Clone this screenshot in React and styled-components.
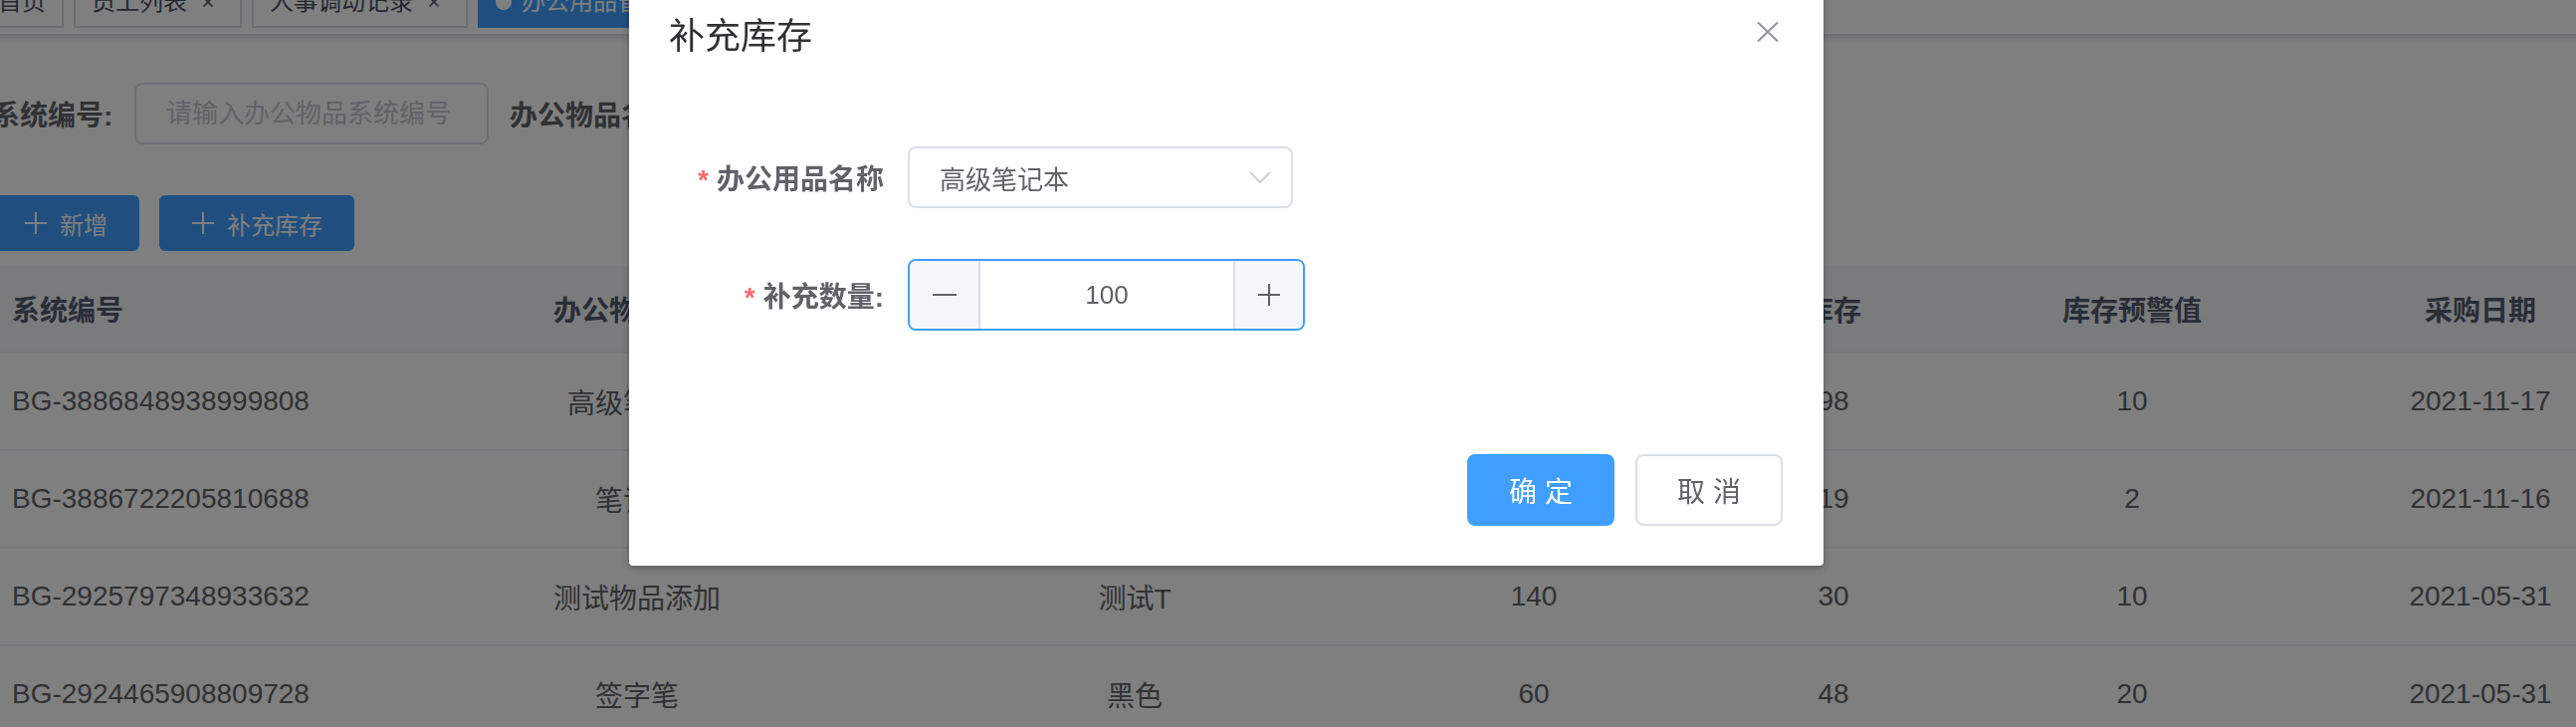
import React from "react";
import styled, { createGlobalStyle } from "styled-components";

const tags = [
	{ title: "首页" },
	{ title: "员工列表", closable: true },
	{ title: "人事调动记录", closable: true },
	{ title: "办公用品管理", closable: true, active: true },
];

const columns = [
	{ title: "系统编号", align: "left" },
	{ title: "办公物品名称" },
	{ title: "规格型号" },
	{ title: "采购数量" },
	{ title: "库存" },
	{ title: "库存预警值" },
	{ title: "采购日期" },
];

const rows = [
	["BG-3886848938999808", "高级笔记本", "A5", "200", "98", "10", "2021-11-17"],
	["BG-3886722205810688", "笔记本", "B5", "100", "19", "2", "2021-11-16"],
	["BG-2925797348933632", "测试物品添加", "测试T", "140", "30", "10", "2021-05-31"],
	["BG-2924465908809728", "签字笔", "黑色", "60", "48", "20", "2021-05-31"],
];

function CloseSmall() {
	return (
		<svg width="32" height="32" viewBox="0 0 32 32">
			<path d="M11.5 11.5 L20.5 20.5 M20.5 11.5 L11.5 20.5" stroke="#495060" strokeWidth="1.6" fill="none" />
		</svg>
	);
}

function PlusIcon({ size = 24, color = "#fff", width = 2 }) {
	return (
		<svg width={size} height={size} viewBox="0 0 24 24">
			<path d="M12 1 V23 M1 12 H23" stroke={color} strokeWidth={width} fill="none" />
		</svg>
	);
}

function App() {
	return (
		<>
			<GlobalStyle />
			<Main>
				<TagsBar>
					{tags.map((t) => (
						<Tag key={t.title} $active={t.active}>
							{t.active && <Dot />}
							{t.title}
							{t.closable && (
								<TagClose>
									<CloseSmall />
								</TagClose>
							)}
						</Tag>
					))}
				</TagsBar>

				<SearchRow>
					<SearchLabel>系统编号:</SearchLabel>
					<TextInput placeholder="请输入办公物品系统编号" readOnly />
					<SearchLabel $gap>办公物品名称:</SearchLabel>
					<TextInput placeholder="请输入办公物品名称" readOnly />
				</SearchRow>

				<ButtonRow>
					<ToolButton>
						<PlusIcon />
						<span>新增</span>
					</ToolButton>
					<ToolButton>
						<PlusIcon />
						<span>补充库存</span>
					</ToolButton>
				</ButtonRow>

				<Table>
					<HeadRow>
						{columns.map((c) => (
							<HeadCell key={c.title} $align={c.align}>
								{c.title}
							</HeadCell>
						))}
					</HeadRow>
					{rows.map((r) => (
						<BodyRow key={r[0]}>
							{r.map((v, i) => (
								<Cell key={i} $align={columns[i].align}>
									{v}
								</Cell>
							))}
						</BodyRow>
					))}
				</Table>
			</Main>

			<Overlay />
			<Dialog>
				<DialogHeader>
					<DialogTitle>补充库存</DialogTitle>
					<DialogClose>
						<svg width="32" height="32" viewBox="0 0 32 32">
							<path d="M6 6.5 L26 25.5 M26 6.5 L6 25.5" stroke="#909399" strokeWidth="2" fill="none" />
						</svg>
					</DialogClose>
				</DialogHeader>
				<DialogBody>
					<FormItem $height={62} $space={51}>
						<FormLabel>
							<Required>*</Required>办公用品名称
						</FormLabel>
						<SelectBox>
							<span>高级笔记本</span>
							<svg width="22" height="12" viewBox="0 0 22 12">
								<path d="M1 1 L11 11 L21 1" stroke="#C0C4CC" strokeWidth="1.6" fill="none" />
							</svg>
						</SelectBox>
					</FormItem>
					<FormItem $height={72} $space={44}>
						<FormLabel>
							<Required>*</Required>补充数量:
						</FormLabel>
						<NumberBox>
							<Stepper $side="left">
								<svg width="24" height="24" viewBox="0 0 24 24">
									<path d="M0 12 H24" stroke="#606266" strokeWidth="2" fill="none" />
								</svg>
							</Stepper>
							<NumberValue>100</NumberValue>
							<Stepper $side="right">
								<PlusIcon color="#606266" />
							</Stepper>
						</NumberBox>
					</FormItem>
				</DialogBody>
				<DialogFooter>
					<DialogButton $primary>确 定</DialogButton>
					<DialogButton>取 消</DialogButton>
				</DialogFooter>
			</Dialog>
		</>
	);
}

const GlobalStyle = createGlobalStyle`
	html, body {
		margin: 0;
		padding: 0;
		background: #fff;
		overflow: hidden;
	}
	body {
		font-family: "Liberation Sans", "Noto Sans CJK SC", sans-serif;
		color: #606266;
	}
	* {
		box-sizing: border-box;
	}
`;

// page is scrolled a little, so the content starts above and left of the window
const Main = styled.div`
	margin: -32px 0 0 -8px;
	width: 2700px;
`;

const TagsBar = styled.div`
	height: 68px;
	padding-top: 8px;
	display: flex;
	align-items: flex-start;
	gap: 10px;
	background: #fff;
	border-bottom: 2px solid #d8dce5;
	box-shadow: 0 2px 6px rgba(0, 0, 0, 0.12), 0 0 6px rgba(0, 0, 0, 0.04);

	& > :first-child {
		margin-left: -12px;
	}
`;

const Tag = styled.div`
	height: 52px;
	padding: 0 16px;
	display: inline-flex;
	align-items: center;
	font-size: 24px;
	line-height: 48px;
	white-space: nowrap;
	color: ${(p) => (p.$active ? "#fff" : "#495060")};
	background: ${(p) => (p.$active ? "#409EFF" : "#fff")};
	border: 2px solid ${(p) => (p.$active ? "#409EFF" : "#d8dce5")};
`;

const Dot = styled.span`
	width: 16px;
	height: 16px;
	border-radius: 50%;
	background: #fff;
	margin-right: 10px;
`;

const TagClose = styled.span`
	display: inline-flex;
	margin-left: 5px;
`;

const SearchRow = styled.div`
	margin-top: 47px;
	height: 62px;
	display: flex;
	align-items: center;
`;

const SearchLabel = styled.label`
	width: ${(p) => (p.$gap ? "auto" : "143px")};
	margin-left: ${(p) => (p.$gap ? "21px" : "0")};
	padding-right: 24px;
	text-align: right;
	white-space: nowrap;
	font-size: 28px;
	font-weight: 700;
	color: #606266;
`;

const TextInput = styled.input`
	width: 356px;
	height: 62px;
	padding: 0 30px;
	border: 2px solid #dcdfe6;
	border-radius: 8px;
	font-family: inherit;
	font-size: 26px;
	color: #606266;
	outline: none;

	&::placeholder {
		color: #c0c4cc;
	}
`;

const ButtonRow = styled.div`
	margin-top: 51px;
	display: flex;
	gap: 20px;
`;

const ToolButton = styled.button`
	height: 56px;
	padding: 0 30px;
	display: inline-flex;
	align-items: center;
	gap: 12px;
	background: #409eff;
	border: 2px solid #409eff;
	border-radius: 6px;
	color: #fff;
	font-family: inherit;
	font-size: 24px;
`;

const Table = styled.div`
	margin-top: 15px;
`;

const grid = `
	display: grid;
	grid-template-columns: 398px 500px 500px 302px 300px 300px 400px;
`;

const HeadRow = styled.div`
	${grid}
	height: 88px;
	background: #f5f7fa;
	border-bottom: 2px solid #ebeef5;
`;

const BodyRow = styled.div`
	${grid}
	height: 98px;
	border-bottom: 2px solid #ebeef5;
`;

const HeadCell = styled.div`
	padding: 0 20px;
	display: flex;
	align-items: center;
	justify-content: ${(p) => (p.$align === "left" ? "flex-start" : "center")};
	font-size: 28px;
	font-weight: 700;
	color: #515a6e;
`;

const Cell = styled.div`
	padding: 0 20px;
	display: flex;
	align-items: center;
	justify-content: ${(p) => (p.$align === "left" ? "flex-start" : "center")};
	font-size: 28px;
	color: #606266;
`;

const Overlay = styled.div`
	position: fixed;
	inset: 0;
	background: rgba(0, 0, 0, 0.5);
	z-index: 10;
`;

const Dialog = styled.div`
	position: fixed;
	top: -27px;
	left: 632px;
	width: 1200px;
	background: #fff;
	border-radius: 4px;
	box-shadow: 0 2px 6px rgba(0, 0, 0, 0.3);
	z-index: 11;
`;

const DialogHeader = styled.div`
	position: relative;
	padding: 40px 40px 20px;
`;

const DialogTitle = styled.div`
	font-size: 36px;
	line-height: 48px;
	color: #303133;
`;

const DialogClose = styled.span`
	position: absolute;
	top: 43px;
	right: 40px;
	display: flex;
`;

const DialogBody = styled.div`
	padding: 66px 40px 60px;
`;

const FormItem = styled.div`
	height: ${(p) => p.$height}px;
	margin-bottom: ${(p) => p.$space}px;
	display: flex;
	align-items: center;

	&:last-child {
		margin-bottom: 44px;
	}
`;

const FormLabel = styled.label`
	width: 240px;
	padding-right: 24px;
	text-align: right;
	font-size: 28px;
	font-weight: 700;
	color: #606266;
	white-space: nowrap;
`;

const Required = styled.span`
	color: #f56c6c;
	margin-right: 8px;
`;

const SelectBox = styled.div`
	width: 387px;
	height: 62px;
	padding: 0 20px 0 30px;
	display: flex;
	align-items: center;
	justify-content: space-between;
	border: 2px solid #dcdfe6;
	border-radius: 8px;
	font-size: 26px;
	color: #606266;
`;

const NumberBox = styled.div`
	width: 399px;
	height: 72px;
	display: flex;
	border: 2px solid #409eff;
	border-radius: 8px;
	overflow: hidden;
`;

const Stepper = styled.div`
	width: ${(p) => (p.$side === "left" ? "71px" : "70px")};
	display: flex;
	align-items: center;
	justify-content: center;
	background: #f5f7fa;
	border-${(p) => (p.$side === "left" ? "right" : "left")}: 2px solid #dcdfe6;
`;

const NumberValue = styled.div`
	flex: 1;
	display: flex;
	align-items: center;
	justify-content: center;
	font-size: 26px;
	color: #606266;
`;

const DialogFooter = styled.div`
	padding: 20px 41px 40px;
	display: flex;
	justify-content: flex-end;
	gap: 21px;
`;

const DialogButton = styled.button`
	width: 148px;
	height: 72px;
	border-radius: 8px;
	border: 2px solid ${(p) => (p.$primary ? "#409EFF" : "#dcdfe6")};
	background: ${(p) => (p.$primary ? "#409EFF" : "#fff")};
	color: ${(p) => (p.$primary ? "#fff" : "#606266")};
	font-family: inherit;
	font-size: 28px;
`;

export default App;
